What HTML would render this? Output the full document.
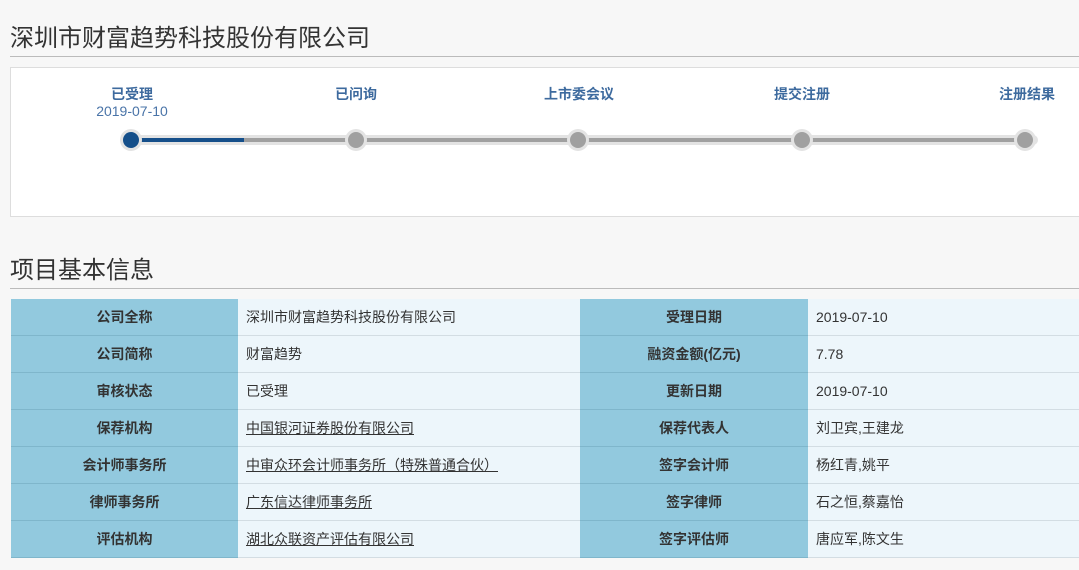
<!DOCTYPE html>
<html><head><meta charset="utf-8"><style>
body{margin:0;width:1079px;height:570px;overflow:hidden;background:#f7f7f7;font-family:"Liberation Sans","Noto Sans CJK SC",sans-serif;position:relative}
.h{position:absolute;left:10px;font-size:24px;color:#333;white-space:nowrap}
.ln{position:absolute;left:10px;width:1069px;height:1px;background:#bbb}
.box{position:absolute;left:10px;top:67px;width:1080px;height:148px;background:#fff;border:1px solid #ddd}
.lab{position:absolute;font-size:14px;font-weight:bold;color:#3d6a9e;transform:translateX(-50%);white-space:nowrap}
.dt{position:absolute;font-size:14px;color:#4a74a8;transform:translateX(-50%)}
.halo{position:absolute;left:120px;top:135px;width:918px;height:10px;background:#e3e3e3;border-radius:5px}
.trk{position:absolute;left:130px;top:138px;width:895px;height:4px;background:#a0a0a0}
.trk2{position:absolute;left:130px;top:138px;width:114px;height:4px;background:#154f8a}
.dot{position:absolute;top:129px;width:22px;height:22px;border-radius:50%;background:#e3e3e3;transform:translateX(-50%)}
.dot i{position:absolute;left:3px;top:3px;width:16px;height:16px;border-radius:50%;background:#a0a0a0}
table{position:absolute;left:11px;top:299px;border-collapse:collapse;width:1080px;font-size:14px;color:#333}
td{height:36px;border-bottom:1px solid #d3dde3;padding:0}
td.k{background:#92c9de;text-align:center;font-weight:bold;border-bottom-color:#7fb6cb}
td.v{background:#edf6fb;padding-left:8px}
u{text-decoration:underline}
</style></head><body>
<div class="h" style="top:18px">深圳市财富趋势科技股份有限公司</div>
<div class="ln" style="top:56px"></div>
<div class="box"></div>
<div class="lab" style="left:132px;top:84px">已受理</div>
<div class="dt" style="left:132px;top:103px">2019-07-10</div>
<div class="lab" style="left:356px;top:84px">已问询</div>
<div class="lab" style="left:579px;top:84px">上市委会议</div>
<div class="lab" style="left:802px;top:84px">提交注册</div>
<div class="lab" style="left:1027px;top:84px">注册结果</div>
<div class="halo"></div><div class="trk"></div><div class="trk2"></div>
<div class="dot" style="left:131px"><i style="background:#154f8a"></i></div>
<div class="dot" style="left:356px"><i></i></div>
<div class="dot" style="left:578px"><i></i></div>
<div class="dot" style="left:802px"><i></i></div>
<div class="dot" style="left:1025px"><i></i></div>
<div class="h" style="top:250px">项目基本信息</div>
<div class="ln" style="top:288px"></div>
<table>
<colgroup><col style="width:227px"><col style="width:342px"><col style="width:228px"><col></colgroup>
<tr><td class="k">公司全称</td><td class="v">深圳市财富趋势科技股份有限公司</td><td class="k">受理日期</td><td class="v">2019-07-10</td></tr>
<tr><td class="k">公司简称</td><td class="v">财富趋势</td><td class="k">融资金额(亿元)</td><td class="v">7.78</td></tr>
<tr><td class="k">审核状态</td><td class="v">已受理</td><td class="k">更新日期</td><td class="v">2019-07-10</td></tr>
<tr><td class="k">保荐机构</td><td class="v"><u>中国银河证券股份有限公司</u></td><td class="k">保荐代表人</td><td class="v">刘卫宾,王建龙</td></tr>
<tr><td class="k">会计师事务所</td><td class="v"><u>中审众环会计师事务所（特殊普通合伙）</u></td><td class="k">签字会计师</td><td class="v">杨红青,姚平</td></tr>
<tr><td class="k">律师事务所</td><td class="v"><u>广东信达律师事务所</u></td><td class="k">签字律师</td><td class="v">石之恒,蔡嘉怡</td></tr>
<tr><td class="k">评估机构</td><td class="v"><u>湖北众联资产评估有限公司</u></td><td class="k">签字评估师</td><td class="v">唐应军,陈文生</td></tr>
</table>
</body></html>
